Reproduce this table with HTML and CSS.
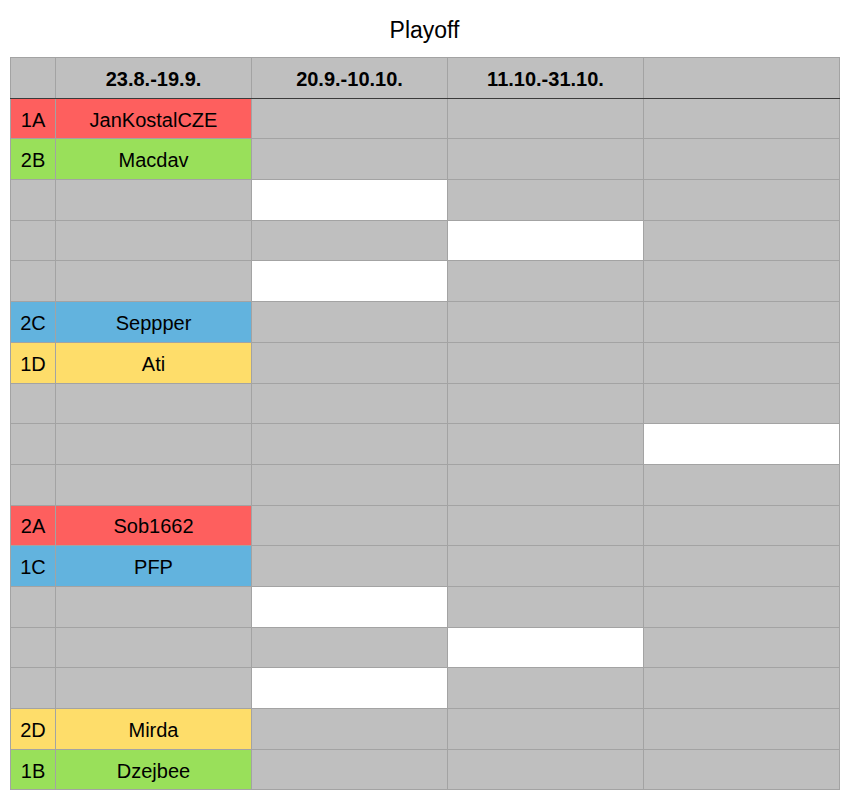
FILE: index.html
```html
<!DOCTYPE html>
<html>
<head>
<meta charset="utf-8">
<title>Playoff</title>
<link rel="stylesheet" href="styles.css">
</head>
<body>
<div class="page">
  <h1 class="title">Playoff</h1>
  <table class="bracket">
    <colgroup>
      <col class="c-seed"><col class="c-round"><col class="c-round"><col class="c-round"><col class="c-round">
    </colgroup>
    <thead>
      <tr><th></th><th>23.8.-19.9.</th><th>20.9.-10.10.</th><th>11.10.-31.10.</th><th></th></tr>
    </thead>
    <tbody>
      <tr><td class="red">1A</td><td class="red">JanKostalCZE</td><td></td><td></td><td></td></tr>
      <tr><td class="green">2B</td><td class="green">Macdav</td><td></td><td></td><td></td></tr>
      <tr><td></td><td></td><td class="white"></td><td></td><td></td></tr>
      <tr><td></td><td></td><td></td><td class="white"></td><td></td></tr>
      <tr><td></td><td></td><td class="white"></td><td></td><td></td></tr>
      <tr><td class="blue">2C</td><td class="blue">Seppper</td><td></td><td></td><td></td></tr>
      <tr><td class="yellow">1D</td><td class="yellow">Ati</td><td></td><td></td><td></td></tr>
      <tr><td></td><td></td><td></td><td></td><td></td></tr>
      <tr><td></td><td></td><td></td><td></td><td class="white"></td></tr>
      <tr><td></td><td></td><td></td><td></td><td></td></tr>
      <tr><td class="red">2A</td><td class="red">Sob1662</td><td></td><td></td><td></td></tr>
      <tr><td class="blue">1C</td><td class="blue">PFP</td><td></td><td></td><td></td></tr>
      <tr><td></td><td></td><td class="white"></td><td></td><td></td></tr>
      <tr><td></td><td></td><td></td><td class="white"></td><td></td></tr>
      <tr><td></td><td></td><td class="white"></td><td></td><td></td></tr>
      <tr><td class="yellow">2D</td><td class="yellow">Mirda</td><td></td><td></td><td></td></tr>
      <tr><td class="green">1B</td><td class="green">Dzejbee</td><td></td><td></td><td></td></tr>
    </tbody>
  </table>
</div>
</body>
</html>
```
FILE: styles.css
```css
html, body {
  margin: 0;
  padding: 0;
  background: #ffffff;
}
.page {
  padding: 16px 9px 0 10px;
  font-family: "Liberation Sans", Arial, Helvetica, sans-serif;
  color: #000;
}
.title {
  margin: 0 0 13px 0;
  font-size: 23px;
  font-weight: normal;
  line-height: 28px;
  text-align: center;
}
.bracket {
  border-collapse: collapse;
  width: 830px;
  table-layout: fixed;
  font-size: 20px;
}
.c-seed { width: 45px; }
.c-round { width: 196px; }
.bracket th,
.bracket td {
  border: 1px solid #a3a3a3;
  background: #bfbfbf;
  text-align: center;
  padding: 2px 0 0 0;
  height: 37.7px;
  line-height: 22px;
}
.bracket th {
  font-weight: bold;
  font-size: 20px;
  border-bottom: 1px solid #3a3a3a;
}
.bracket td.white { background: #ffffff; }
.bracket td.red { background: #fe5f5e; }
.bracket td.green { background: #99e05a; }
.bracket td.blue { background: #62b3de; }
.bracket td.yellow { background: #fedd6a; }
```
